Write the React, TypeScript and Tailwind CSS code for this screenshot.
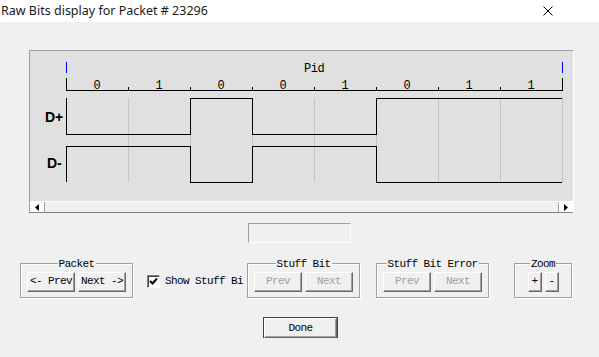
import React from 'react';

const mono = "font-['Liberation_Mono',monospace] text-[11px] tracking-[-0.6px]";

// classic raised 3D button
function Btn({ label, w, disabled = false }: { label: string; w: string; disabled?: boolean }) {
  return (
    <div
      className={`${w} h-[20px] flex items-center justify-center whitespace-nowrap bg-[#f0f0f0] border-t border-l border-t-white border-l-white border-r border-b border-r-[#696969] border-b-[#696969] shadow-[inset_-1px_-1px_0_#a0a0a0] ${mono} ${disabled ? 'text-[#a0a0a0]' : 'text-black'}`}
    >
      {label}
    </div>
  );
}

function Group({ title, w, children }: { title: string; w: string; children: React.ReactNode }) {
  return (
    <div className={`relative ${w} h-[35px] border border-[#a0a0a0] shadow-[1px_1px_0_#fff,inset_1px_1px_0_#fff] flex items-center justify-center gap-[3px] pt-[2px]`}>
      <span className={`absolute left-1/2 top-0 -translate-x-1/2 -translate-y-1/2 whitespace-nowrap bg-[#f0f0f0] px-[1px] leading-none ${mono} text-black`}>
        {title}
      </span>
      {children}
    </div>
  );
}

const ticks = [128, 190, 252, 314, 376, 438, 500];
const bits = ['0', '1', '0', '0', '1', '0', '1', '1'];

function Waveform() {
  return (
    <svg width="543" height="150" viewBox="30 51 543 150" shapeRendering="crispEdges" className="block">
      <line x1="66.5" y1="62" x2="66.5" y2="73" stroke="#0000ff" />
      <line x1="562.5" y1="62" x2="562.5" y2="73" stroke="#0000ff" />
      <text x="304" y="72" fontFamily="Liberation Mono, monospace" fontSize="12" letterSpacing="-0.5">Pid</text>
      <line x1="66" y1="90.5" x2="563" y2="90.5" stroke="#000" />
      <line x1="66.5" y1="78" x2="66.5" y2="90" stroke="#000" />
      <line x1="562.5" y1="78" x2="562.5" y2="90" stroke="#000" />
      {ticks.map((x) => (
        <line key={x} x1={x + 0.5} y1="87" x2={x + 0.5} y2="90" stroke="#000" />
      ))}
      {bits.map((b, i) => (
        <text key={i} x={97 + i * 62} y="88.5" textAnchor="middle" fontFamily="Liberation Mono, monospace" fontSize="12">{b}</text>
      ))}
      {[...ticks, 562].map((x) => (
        <line key={'g' + x} x1={x + 0.5} y1="98" x2={x + 0.5} y2="182" stroke="#c4c4c4" />
      ))}
      <text x="45" y="122" fontFamily="Liberation Sans, Arial, sans-serif" fontWeight="bold" fontSize="14">D+</text>
      <text x="47" y="168" fontFamily="Liberation Sans, Arial, sans-serif" fontWeight="bold" fontSize="14">D-</text>
      <path d="M66.5 98 V134.5 H190.5 V98.5 H252.5 V134.5 H376.5 V98.5 H562" fill="none" stroke="#000" />
      <path d="M66.5 182 V146.5 H190.5 V182.5 H252.5 V146.5 H376.5 V182.5 H562" fill="none" stroke="#000" />
    </svg>
  );
}

export default function App() {
  return (
    <div className="w-[599px] h-[357px] bg-[#f0f0f0] overflow-hidden flex flex-col">
      {/* Title bar */}
      <div className="h-[22px] bg-white flex items-center justify-between pl-[1px] pr-[46px]">
        <span className="font-['Noto_Sans',sans-serif] text-[12.5px] text-[#1a1a1a] leading-none">Raw Bits display for Packet # 23296</span>
        <svg width="10" height="10" viewBox="0 0 10 10">
          <path d="M0.5 0.5 L9.5 9.5 M9.5 0.5 L0.5 9.5" stroke="#000" strokeWidth="1" />
        </svg>
      </div>

      {/* Canvas panel */}
      <div className="mt-[28px] ml-[29px] w-[545px] h-[164px] border-t border-l border-[#a0a0a0] border-r border-b border-r-white border-b-[#f0f0f0] bg-[#e0e0e0] flex flex-col">
        <Waveform />
        <div className="h-[12px] border-t border-white bg-[#f0f0f0] flex border-b border-b-[#808080]">
          <div className="w-[15px] h-full bg-white border-r border-[#a0a0a0] flex items-center justify-center">
            <svg width="4" height="7" viewBox="0 0 4 7"><path d="M4 0 L0 3.5 L4 7 Z" fill="#000" /></svg>
          </div>
          <div className="flex-1" />
          <div className="w-[15px] h-full bg-white border-l border-[#a0a0a0] flex items-center justify-center">
            <svg width="4" height="7" viewBox="0 0 4 7"><path d="M0 0 L4 3.5 L0 7 Z" fill="#000" /></svg>
          </div>
        </div>
      </div>

      {/* Empty text box */}
      <div className="mt-[9px] ml-[248px] w-[103px] h-[20px] border-t border-l border-[#a0a0a0] border-r border-b border-r-white border-b-white" />

      {/* Controls row */}
      <div className="mt-[20px] ml-[20px] flex items-center">
        <Group title="Packet" w="w-[113px]">
          <Btn label="<- Prev" w="w-[48px]" />
          <Btn label="Next ->" w="w-[48px]" />
        </Group>
        <div className="ml-[14px] w-[96px] flex items-center gap-[5px] pt-[2px]">
          <div className="w-[13px] h-[13px] bg-white border-t border-l border-[#808080] border-r border-b border-r-white border-b-white shadow-[inset_1px_1px_0_#404040] flex items-center justify-center">
            <svg width="9" height="9" viewBox="0 0 9 9">
              <path d="M1 4 L3.5 6.5 L8 1.5" fill="none" stroke="#000" strokeWidth="2" />
            </svg>
          </div>
          <span className={`${mono} text-black whitespace-nowrap`}>Show Stuff Bi</span>
        </div>
        <div className="ml-[4px]">
          <Group title="Stuff Bit" w="w-[113px]">
            <Btn label="Prev" w="w-[48px]" disabled />
            <Btn label="Next" w="w-[48px]" disabled />
          </Group>
        </div>
        <div className="ml-[16px]">
          <Group title="Stuff Bit Error" w="w-[113px]">
            <Btn label="Prev" w="w-[48px]" disabled />
            <Btn label="Next" w="w-[48px]" disabled />
          </Group>
        </div>
        <div className="ml-[25px]">
          <Group title="Zoom" w="w-[58px]">
            <Btn label="+" w="w-[14px]" />
            <Btn label="-" w="w-[14px]" />
          </Group>
        </div>
      </div>

      {/* Done */}
      <div className="mt-[19px] ml-[263px] w-[75px] h-[21px] border border-[#404040] flex">
        <Btn label="Done" w="w-full" />
      </div>
    </div>
  );
}
